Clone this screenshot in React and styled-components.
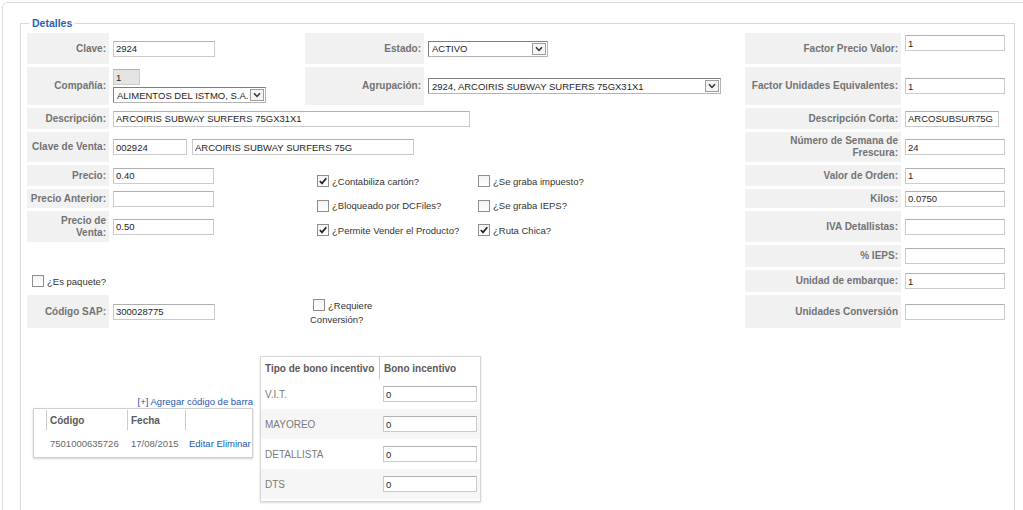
import React from 'react';
import styled, { createGlobalStyle } from 'styled-components';

const GlobalStyle = createGlobalStyle`
  body {
    margin: 0;
    background: #fff;
    overflow: hidden;
    font-family: "Liberation Sans", Arial, sans-serif;
  }
`;

const Panel = styled.div`
  margin: 2px 0 0 2px;
  width: 1040px;
  height: 520px;
  box-sizing: border-box;
  overflow: hidden;
  border: 1px solid #dcdcdc;
  border-radius: 5px;
  padding: 14px 0 0 17px;
`;

const Fieldset = styled.fieldset`
  width: 995px;
  box-sizing: border-box;
  margin: 0;
  border: 1px solid #d9d9d9;
  padding: 3px 6px 40px 6px;
`;

const Legend = styled.legend`
  margin-left: 2px;
  padding: 0 3px;
  font-size: 10.5px;
  line-height: 13px;
  font-weight: bold;
  color: #2a62b7;
`;

const FormGrid = styled.div`
  display: grid;
  grid-template-columns: 82px 192px 119px 317px 156px 1fr;
  grid-template-rows: 31px 38px 21px 30px 21px 19px 31px 22px 22px 33px;
  column-gap: 2px;
  row-gap: 3px;
`;

const Label = styled.div`
  grid-column: ${p => p.$col};
  grid-row: ${p => p.$row};
  background: #f1f1f1;
  display: flex;
  align-items: center;
  justify-content: flex-end;
  text-align: right;
  padding-right: 3px;
  font-size: 10px;
  line-height: 12px;
  font-weight: bold;
  color: #737373;
`;

const Field = styled.div`
  grid-column: ${p => p.$col};
  grid-row: ${p => p.$row};
  display: flex;
  flex-direction: ${p => (p.$stack ? 'column' : 'row')};
  align-items: ${p => (p.$stack || p.$top ? 'flex-start' : 'center')};
  justify-content: ${p => (p.$stack ? 'center' : 'flex-start')};
  gap: ${p => (p.$stack ? '2px' : '5px')};
  padding: ${p => (p.$top ? '2px 0 0 2px' : '0 0 0 2px')};
`;

const Input = styled.input`
  width: ${p => p.$w || 100}px;
  height: 16px;
  box-sizing: border-box;
  margin: 0;
  padding: 0 2px;
  border: 1px solid #cbcbcb;
  border-top-color: #b0b0b0;
  background: ${p => (p.disabled ? '#e4e4e4' : '#fff')};
  color: #1e1e1e;
  font: 9.5px "Liberation Sans", Arial, sans-serif;
  outline: none;
`;

const SelectBox = styled.div`
  width: ${p => p.$w}px;
  height: 16px;
  box-sizing: border-box;
  border: 1px solid #7e7e7e;
  border-right-color: #b4b4b4;
  border-bottom-color: #b4b4b4;
  background: #fff;
  display: flex;
  align-items: center;
  justify-content: space-between;
  padding-left: 3px;
  font-size: 9.5px;
  color: #1e1e1e;
`;

const SelectArrow = styled.span`
  width: 14px;
  height: 12px;
  margin-right: 1px;
  box-sizing: border-box;
  border: 1px solid #9c9c9c;
  background: #f5f5f5;
  display: flex;
  align-items: center;
  justify-content: center;
`;

const CheckGroup = styled.div`
  grid-column: 3 / 5;
  grid-row: 5 / 9;
  display: grid;
  grid-template-columns: 161px auto;
  grid-auto-rows: 14px;
  row-gap: 10.5px;
  padding: 9px 0 0 12px;
`;

const CheckItem = styled.label`
  display: flex;
  align-items: center;
  gap: 3px;
  font-size: 9.5px;
  color: #333;
  white-space: nowrap;
`;

const Box = styled.span`
  width: 12px;
  height: 12px;
  flex: none;
  box-sizing: border-box;
  border: 1px solid #8e8e8e;
  background: linear-gradient(#f4f4f4, #fff);
  display: inline-flex;
  align-items: center;
  justify-content: center;
  vertical-align: middle;
`;

const LooseCheck = styled.div`
  grid-column: ${p => p.$col};
  grid-row: ${p => p.$row};
  display: flex;
  align-items: center;
  padding-left: 5px;
`;

const WrapCheck = styled.div`
  grid-column: 3;
  grid-row: 10;
  width: 66px;
  padding: 4px 0 0 5px;
  font-size: 9.5px;
  line-height: 14px;
  color: #333;

  ${Box} {
    margin: 0 3px 0 3px;
    position: relative;
    top: -1px;
  }
`;

const Bottom = styled.div`
  display: flex;
  align-items: center;
  gap: 7px;
  margin: 28px 0 0 6px;
`;

const BarcodeBlock = styled.div`
  width: 220px;
  display: flex;
  flex-direction: column;
  align-items: flex-end;
  margin-top: -4px;
`;

const Link = styled.a`
  font-size: 9.5px;
  line-height: 12px;
  color: #2458b3;
  text-decoration: none;
  cursor: pointer;
`;

const CodeTable = styled.div`
  width: 100%;
  height: 50px;
  box-sizing: border-box;
  border: 1px solid #cfcfcf;
  box-shadow: 0 1px 2px rgba(0, 0, 0, 0.18);
  display: grid;
  grid-template-columns: 12px 81px 58px 1fr;
  grid-template-rows: 20px 1fr;
  padding-top: 1px;
`;

const CodeHead = styled.div`
  border-left: ${p => (p.$blank ? 'none' : '1px solid #cccccc')};
  padding-left: 3px;
  display: flex;
  align-items: center;
  font-size: 10px;
  font-weight: bold;
  color: #5a5a5a;
`;

const CodeCell = styled.div`
  padding-left: 4px;
  display: flex;
  align-items: center;
  font-size: 9.5px;
  color: ${p => (p.$link ? '#2458b3' : '#666')};
  white-space: nowrap;
`;

const BonoTable = styled.div`
  width: 221px;
  box-sizing: border-box;
  border: 1px solid #d6d6d6;
  box-shadow: 0 1px 2px rgba(0, 0, 0, 0.15);
  display: grid;
  grid-template-columns: 118px 1fr;
  grid-template-rows: 22px repeat(4, 30px);
  padding-bottom: 2px;
`;

const BonoHead = styled.div`
  border-left: ${p => (p.$sep ? '1px solid #c8c8c8' : 'none')};
  padding-left: 4px;
  display: flex;
  align-items: center;
  font-size: 10px;
  font-weight: bold;
  color: #5a5a5a;
  white-space: nowrap;
`;

const BonoCell = styled.div`
  background: ${p => (p.$alt ? '#f6f6f6' : '#fff')};
  padding-left: 4px;
  display: flex;
  align-items: center;
  font-size: 10px;
  color: #7a7a7a;
`;

const Chevron = () => (
  <svg width="8" height="6" viewBox="0 0 8 6">
    <path d="M1 1.2 L4 4.4 L7 1.2" fill="none" stroke="#333" strokeWidth="1.5" />
  </svg>
);

const Tick = () => (
  <svg width="10" height="10" viewBox="0 0 10 10">
    <path d="M1.8 5 L4 7.4 L8.3 2.2" fill="none" stroke="#222" strokeWidth="1.7" />
  </svg>
);

const Check = ({ on }) => <Box>{on && <Tick />}</Box>;

const Select = ({ w, children }) => (
  <SelectBox $w={w}>
    <span>{children}</span>
    <SelectArrow>
      <Chevron />
    </SelectArrow>
  </SelectBox>
);

const rightRows = [
  { label: 'Factor Precio Valor:', value: '1', top: true },
  { label: 'Factor Unidades Equivalentes:', value: '1' },
  { label: 'Descripción Corta:', value: 'ARCOSUBSUR75G', w: 94 },
  { label: <>Número de Semana de<br />Frescura:</>, value: '24' },
  { label: 'Valor de Orden:', value: '1' },
  { label: 'Kilos:', value: '0.0750' },
  { label: 'IVA Detallistas:', value: '' },
  { label: '% IEPS:', value: '' },
  { label: 'Unidad de embarque:', value: '1' },
  { label: 'Unidades Conversión', value: '' },
];

const checks = [
  ['¿Contabiliza cartón?', true],
  ['¿Se graba impuesto?', false],
  ['¿Bloqueado por DCFiles?', false],
  ['¿Se graba IEPS?', false],
  ['¿Permite Vender el Producto?', true],
  ['¿Ruta Chica?', true],
];

const bonos = ['V.I.T.', 'MAYOREO', 'DETALLISTA', 'DTS'];

const App = () => {
  return (
    <Panel>
      <GlobalStyle />
      <Fieldset>
        <Legend>Detalles</Legend>
        <FormGrid>
          <Label $col={1} $row={1}>Clave:</Label>
          <Field $col={2} $row={1}><Input $w={102} value="2924" readOnly /></Field>

          <Label $col={1} $row={2}>Compañía:</Label>
          <Field $col={2} $row={2} $stack>
            <Input $w={27} value="1" disabled readOnly />
            <Select w={153}>ALIMENTOS DEL ISTMO, S.A.</Select>
          </Field>

          <Label $col={1} $row={3}>Descripción:</Label>
          <Field $col="2 / 5" $row={3}>
            <Input $w={357} value="ARCOIRIS SUBWAY SURFERS 75GX31X1" readOnly />
          </Field>

          <Label $col={1} $row={4}>Clave de Venta:</Label>
          <Field $col="2 / 5" $row={4}>
            <Input $w={74} value="002924" readOnly />
            <Input $w={222} value="ARCOIRIS SUBWAY SURFERS 75G" readOnly />
          </Field>

          <Label $col={1} $row={5}>Precio:</Label>
          <Field $col={2} $row={5}><Input $w={101} value="0.40" readOnly /></Field>

          <Label $col={1} $row={6}>Precio Anterior:</Label>
          <Field $col={2} $row={6}><Input $w={101} value="" readOnly /></Field>

          <Label $col={1} $row={7}>Precio de<br />Venta:</Label>
          <Field $col={2} $row={7}><Input $w={101} value="0.50" readOnly /></Field>

          <LooseCheck $col="1 / 3" $row={9}>
            <CheckItem><Check />¿Es paquete?</CheckItem>
          </LooseCheck>

          <Label $col={1} $row={10}>Código SAP:</Label>
          <Field $col={2} $row={10}><Input $w={102} value="300028775" readOnly /></Field>

          <Label $col={3} $row={1}>Estado:</Label>
          <Field $col={4} $row={1}><Select w={120}>ACTIVO</Select></Field>

          <Label $col={3} $row={2}>Agrupación:</Label>
          <Field $col={4} $row={2}>
            <Select w={293}>2924, ARCOIRIS SUBWAY SURFERS 75GX31X1</Select>
          </Field>

          <CheckGroup>
            {checks.map(([text, on]) => (
              <CheckItem key={text}><Check on={on} />{text}</CheckItem>
            ))}
          </CheckGroup>

          <WrapCheck>
            <Check />¿Requiere Conversión?
          </WrapCheck>

          {rightRows.map((r, i) => (
            <React.Fragment key={i}>
              <Label $col={5} $row={i + 1}>{r.label}</Label>
              <Field $col={6} $row={i + 1} $top={r.top}>
                <Input $w={r.w || 100} value={r.value} readOnly />
              </Field>
            </React.Fragment>
          ))}
        </FormGrid>

        <Bottom>
          <BarcodeBlock>
            <Link>[+] Agregar código de barra</Link>
            <CodeTable>
              <CodeHead $blank />
              <CodeHead>Código</CodeHead>
              <CodeHead>Fecha</CodeHead>
              <CodeHead />
              <span />
              <CodeCell>7501000635726</CodeCell>
              <CodeCell>17/08/2015</CodeCell>
              <CodeCell $link>Editar Eliminar</CodeCell>
            </CodeTable>
          </BarcodeBlock>

          <BonoTable>
            <BonoHead>Tipo de bono incentivo</BonoHead>
            <BonoHead $sep>Bono incentivo</BonoHead>
            {bonos.map((b, i) => (
              <React.Fragment key={b}>
                <BonoCell $alt={i % 2 === 1}>{b}</BonoCell>
                <BonoCell $alt={i % 2 === 1}>
                  <Input $w={94} value="0" readOnly />
                </BonoCell>
              </React.Fragment>
            ))}
          </BonoTable>
        </Bottom>
      </Fieldset>
    </Panel>
  );
};

export default App;
